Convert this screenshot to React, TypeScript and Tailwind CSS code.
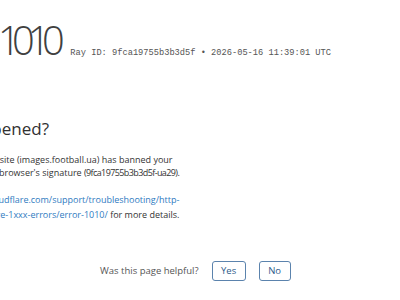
import React from "react";

export default function App() {
  return (
    <div className="w-[400px] h-[300px] overflow-hidden bg-white text-[#333]" style={{ fontFamily: '"Open Sans", sans-serif' }}>
      <div className="-ml-[90px] w-[440px] pt-[20px]">
        <div className="flex items-baseline gap-[10px] whitespace-nowrap -ml-[12px]">
          <h1 className="text-[40px] leading-[40px] font-light text-[#404040]">
            Error <span className="proportional-nums tracking-[-4.5px]">1010</span>
          </h1>
          <span className="text-[8.7px] text-[#555]" style={{ fontFamily: '"Liberation Mono", monospace' }}>
            Ray ID: 9fca19755b3b3d5f • 2026-05-16 11:39:01 UTC
          </span>
        </div>
        <h2 className="mt-[58px] ml-[5px] text-[17px] leading-[22px] font-normal text-[#313131] whitespace-nowrap">What happened?</h2>
        <p className="mt-[13px] -ml-[3px] text-[9px] leading-[13px] whitespace-nowrap">
          The owner of this website (images.football.ua) has banned your<br />
          access based on your browser's signature <span className="tracking-[-0.6px]">(9fca19755b3b3d5f-ua29).</span>
        </p>
        <p className="mt-[13px] -ml-[3px] text-[9px] leading-[15px] whitespace-nowrap">
          <a className="text-[#2f7bbf]" href="#">https://developers.cloudflare.com/support/troubleshooting/http-<br />status-codes/cloudflare-1xxx-errors/error-1010/</a> for more details.
        </p>
      </div>
      <div className="mt-[39px] flex items-center pl-[100px] text-[9.5px]">
        <span className="text-[#555] mr-[13px]">Was this page helpful?</span>
        <button className="w-[34px] h-[20px] border border-[#5b83ad] rounded-[3px] text-[#2d5b8a] text-[9.5px] mr-[13px]">Yes</button>
        <button className="w-[32px] h-[20px] border border-[#5b83ad] rounded-[3px] text-[#2d5b8a] text-[9.5px]">No</button>
      </div>
    </div>
  );
}
